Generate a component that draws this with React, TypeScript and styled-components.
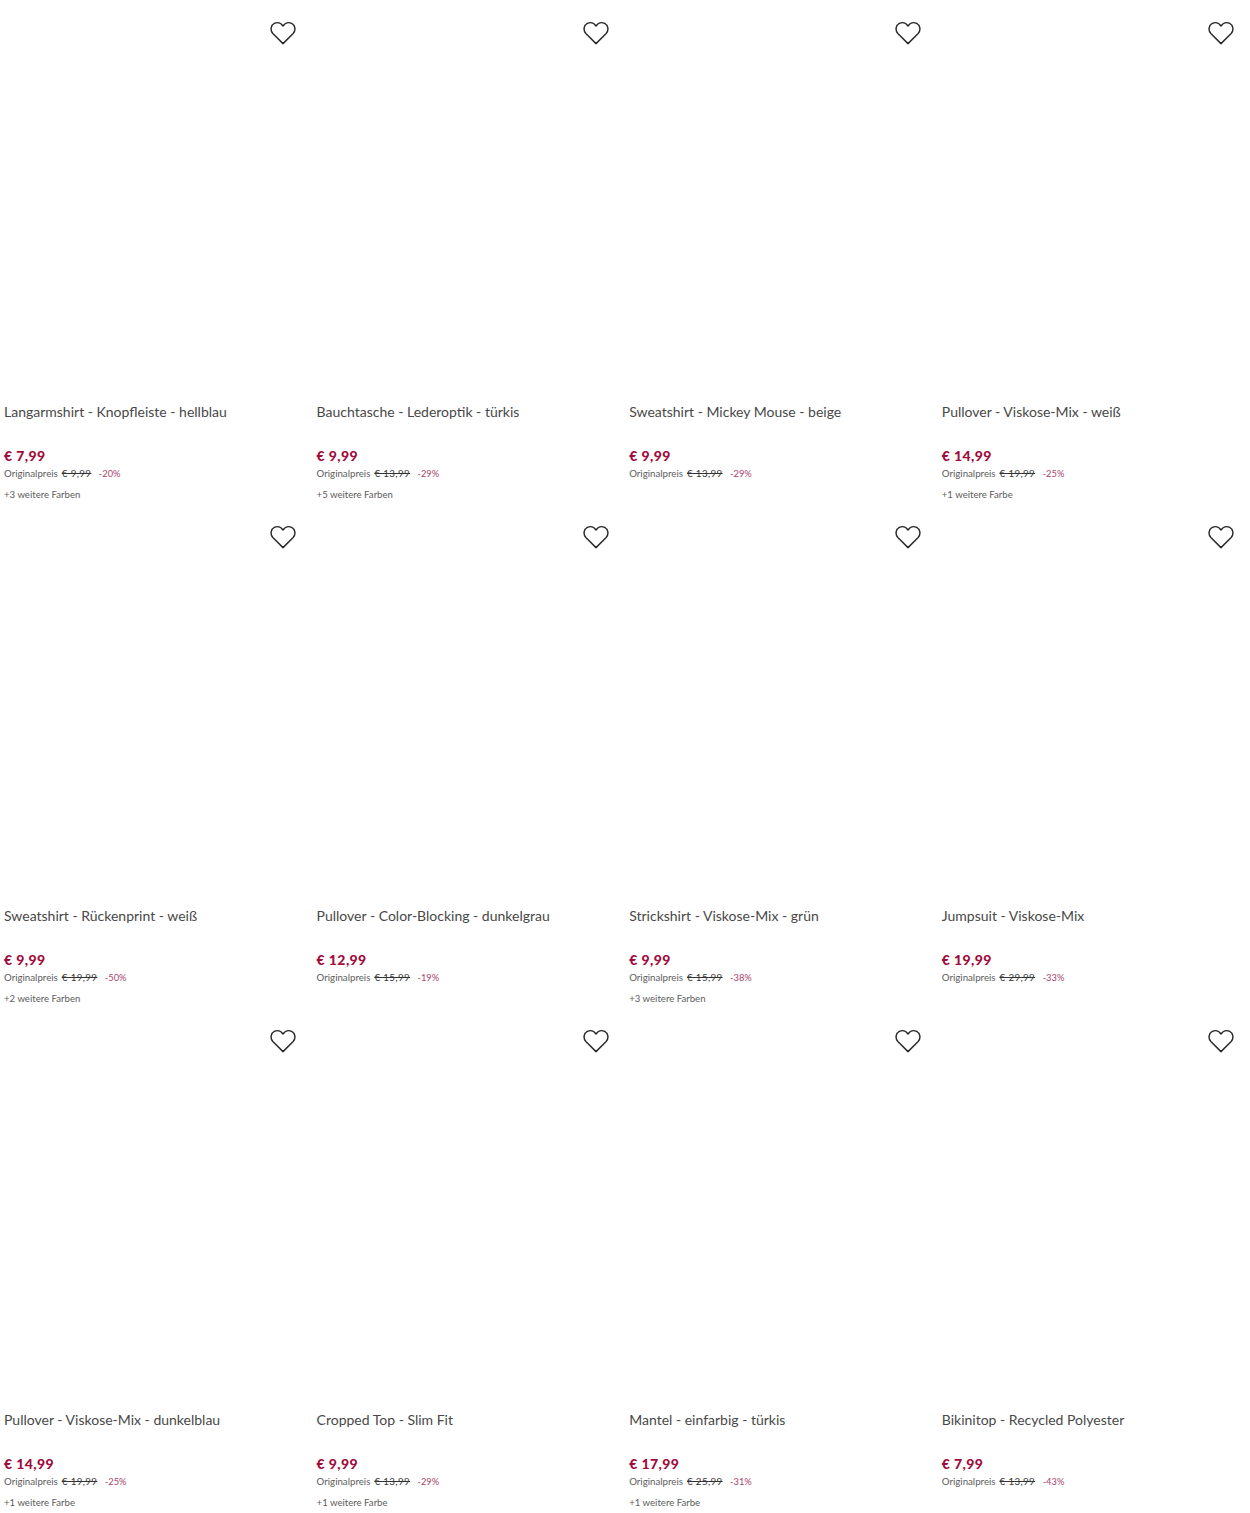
import React from "react";
import styled, { createGlobalStyle } from "styled-components";

const Global = createGlobalStyle`
  html, body { margin: 0; padding: 0; background: #fff; }
  body { font-family: "Lato", "Liberation Sans", sans-serif; }
`;

const Grid = styled.main`
  display: grid;
  grid-template-columns: repeat(4, 312.6px);
  grid-auto-rows: 504px;
  width: 1250px;
  height: 1513px;
  overflow: hidden;
`;

const Card = styled.article`
  display: flex;
  flex-direction: column;
  padding: 0 4px;
`;

const ImageArea = styled.div`
  height: 402px;
  flex: none;
  display: flex;
  justify-content: flex-end;
  padding: 21px 12.6px 0 0;
  box-sizing: border-box;
`;

const HeartIcon = styled.svg`
  width: 26px;
  height: 24px;
  display: block;
`;

const Title = styled.h3`
  margin: 0;
  height: 20px;
  font-size: 14px;
  line-height: 20px;
  font-weight: 400;
  color: #484848;
  white-space: nowrap;
`;

const Price = styled.div`
  margin-top: 24px;
  height: 20px;
  font-size: 14px;
  line-height: 20px;
  font-weight: 900;
  letter-spacing: 0.4px;
  color: #a00c3c;
`;

const PriceRow = styled.div`
  display: flex;
  align-items: baseline;
  height: 16px;
  margin-top: -1px;
  font-size: 9.7px;
  line-height: 16px;
  color: #5c5c5c;
  white-space: nowrap;
`;

const OldPrice = styled.s`
  margin-left: 4px;
  letter-spacing: 0.4px;
  color: #333;
`;

const Discount = styled.span`
  margin-left: 7.5px;
  font-size: 9.3px;
  color: #a8436a;
`;

const Colors = styled.div`
  margin-top: 6px;
  font-size: 9.6px;
  line-height: 16px;
  color: #5c5c5c;
  white-space: nowrap;
`;

const products = [
  ["Langarmshirt - Knopfleiste - hellblau", "€ 7,99", "€ 9,99", "-20%", "+3 weitere Farben"],
  ["Bauchtasche - Lederoptik - türkis", "€ 9,99", "€ 13,99", "-29%", "+5 weitere Farben"],
  ["Sweatshirt - Mickey Mouse - beige", "€ 9,99", "€ 13,99", "-29%", ""],
  ["Pullover - Viskose-Mix - weiß", "€ 14,99", "€ 19,99", "-25%", "+1 weitere Farbe"],
  ["Sweatshirt - Rückenprint - weiß", "€ 9,99", "€ 19,99", "-50%", "+2 weitere Farben"],
  ["Pullover - Color-Blocking - dunkelgrau", "€ 12,99", "€ 15,99", "-19%", ""],
  ["Strickshirt - Viskose-Mix - grün", "€ 9,99", "€ 15,99", "-38%", "+3 weitere Farben"],
  ["Jumpsuit - Viskose-Mix", "€ 19,99", "€ 29,99", "-33%", ""],
  ["Pullover - Viskose-Mix - dunkelblau", "€ 14,99", "€ 19,99", "-25%", "+1 weitere Farbe"],
  ["Cropped Top - Slim Fit", "€ 9,99", "€ 13,99", "-29%", "+1 weitere Farbe"],
  ["Mantel - einfarbig - türkis", "€ 17,99", "€ 25,99", "-31%", "+1 weitere Farbe"],
  ["Bikinitop - Recycled Polyester", "€ 7,99", "€ 13,99", "-43%", ""],
];

const Heart = () => (
  <HeartIcon viewBox="0 0 28 26" fill="none" stroke="#2b2b2b" strokeWidth="1.6" strokeLinejoin="round">
    <path d="M14 24.5 L3 13.5 C-0.2 10 0.8 4.6 4.6 2.6 C8 0.8 11.8 2 14 5.4 C16.2 2 20 0.8 23.4 2.6 C27.2 4.6 28.2 10 25 13.5 Z" />
  </HeartIcon>
);

export default function App() {
  return (
    <>
      <Global />
      <Grid>
        {products.map(([title, price, old, discount, colors]) => (
          <Card key={title}>
            <ImageArea><Heart /></ImageArea>
            <Title>{title}</Title>
            <Price>{price}</Price>
            <PriceRow>
              Originalpreis
              <OldPrice>{old}</OldPrice>
              <Discount>{discount}</Discount>
            </PriceRow>
            {colors && <Colors>{colors}</Colors>}
          </Card>
        ))}
      </Grid>
    </>
  );
}
